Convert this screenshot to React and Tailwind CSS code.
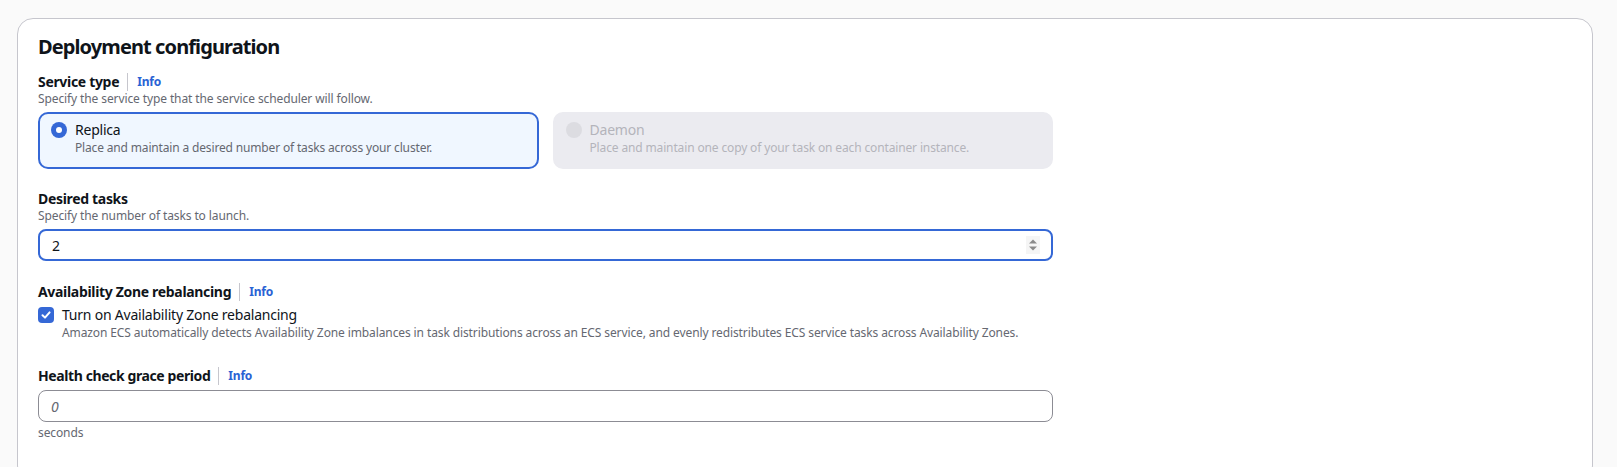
import React from "react";

function Label({ children, info = true, track = "tracking-[-0.32px]" }) {
  return (
    <div className="flex items-center h-[18px]">
      <span className={"text-[14px] leading-[18px] font-bold text-[#0f141a] " + track}>{children}</span>
      {info && (
        <>
          <span className="ml-[8px] w-px h-[18px] bg-[#c6c6cd]" />
          <a className="ml-[9px] text-[12px] leading-[18px] font-bold tracking-[-0.2px] text-[#2a62d4]">Info</a>
        </>
      )}
    </div>
  );
}

function Desc({ children, className = "" }) {
  return (
    <div className={"text-[12px] leading-[16px] tracking-[-0.11px] text-[#656871] " + className}>{children}</div>
  );
}

export default function App() {
  return (
    <div className="min-h-screen bg-[#fafafa] pt-[18px] pl-[17px] pr-[24px] font-['Noto_Sans',sans-serif]">
      <div className="rounded-[16px] border border-[#c6c6cd] bg-white px-5 pt-[16px] pb-[40px]">
        <h2 className="text-[20px] leading-[24px] font-bold tracking-[-0.9px] text-[#0f141a]">Deployment configuration</h2>
        <div className="w-[1015px]">
          <div className="mt-[14px]">
            <Label>Service type</Label>
            <Desc>Specify the service type that the service scheduler will follow.</Desc>
            <div className="mt-[5px] grid grid-cols-2 gap-[14px]">
              <div className="h-[57px] rounded-[10px] border-2 border-[#3568d6] bg-[#f0f7ff] pl-[11px] pt-[6px] flex">
                <div className="h-[20px] flex items-center">
                  <div className="w-4 h-4 rounded-full bg-[#3568d6] flex items-center justify-center">
                    <div className="w-[6px] h-[6px] rounded-full bg-white" />
                  </div>
                </div>
                <div className="ml-[8px]">
                  <div className="text-[14px] leading-[20px] tracking-[-0.22px] text-[#0f141a]">Replica</div>
                  <div className="text-[12px] leading-[16px] tracking-[-0.16px] text-[#656871]">
                    Place and maintain a desired number of tasks across your cluster.
                  </div>
                </div>
              </div>
              <div className="h-[57px] rounded-[10px] border-2 border-[#ebebf0] bg-[#ebebf0] pl-[11px] pt-[6px] flex">
                <div className="h-[20px] flex items-center">
                  <div className="w-4 h-4 rounded-full bg-[#dcdce1]" />
                </div>
                <div className="ml-[8px]">
                  <div className="text-[14px] leading-[20px] tracking-[-0.22px] text-[#b4b4bb]">Daemon</div>
                  <div className="text-[12px] leading-[16px] tracking-[-0.14px] text-[#b4b4bb]">
                    Place and maintain one copy of your task on each container instance.
                  </div>
                </div>
              </div>
            </div>
          </div>

          <div className="mt-[21px]">
            <Label info={false}>Desired tasks</Label>
            <Desc>Specify the number of tasks to launch.</Desc>
            <div className="mt-[5px] h-[32px] rounded-[8px] border-2 border-[#3568d6] bg-white flex items-center pl-[12px] pr-[11px]">
              <span className="flex-1 text-[14px] text-[#0f141a]">2</span>
              <svg width="14" height="18" viewBox="0 0 14 18">
                <rect x="0" y="0" width="14" height="18" fill="#f5f5f5" />
                <path d="M3 7.5 L7 3.5 L11 7.5 Z" fill="#8a8a8a" />
                <path d="M3 10.5 L7 14.5 L11 10.5 Z" fill="#8a8a8a" />
              </svg>
            </div>
          </div>

          <div className="mt-[22px]">
            <Label>Availability Zone rebalancing</Label>
            <div className="mt-[4px] flex items-center h-[20px]">
              <div className="w-4 h-4 rounded-[4px] bg-[#3568d6] flex items-center justify-center">
                <svg width="12" height="12" viewBox="0 0 12 12">
                  <path
                    d="M2.5 6.2 L5 8.6 L9.6 3.4"
                    stroke="white"
                    strokeWidth="2"
                    fill="none"
                    strokeLinecap="round"
                    strokeLinejoin="round"
                  />
                </svg>
              </div>
              <span className="ml-[8px] text-[14px] leading-[20px] tracking-[-0.22px] text-[#0f141a]">
                Turn on Availability Zone rebalancing
              </span>
            </div>
            <Desc className="ml-[24px]">
              Amazon ECS automatically detects Availability Zone imbalances in task distributions across an ECS service, and
              evenly redistributes ECS service tasks across Availability Zones.
            </Desc>
          </div>

          <div className="mt-[26px]">
            <Label track="tracking-[-0.4px]">Health check grace period</Label>
            <div className="mt-[5px] h-[32px] rounded-[8px] border border-[#8c8c94] bg-white flex items-center pl-[12px]">
              <span className="text-[14px] italic text-[#656871]">0</span>
            </div>
            <Desc className="mt-[3px]">seconds</Desc>
          </div>
        </div>
      </div>
    </div>
  );
}
